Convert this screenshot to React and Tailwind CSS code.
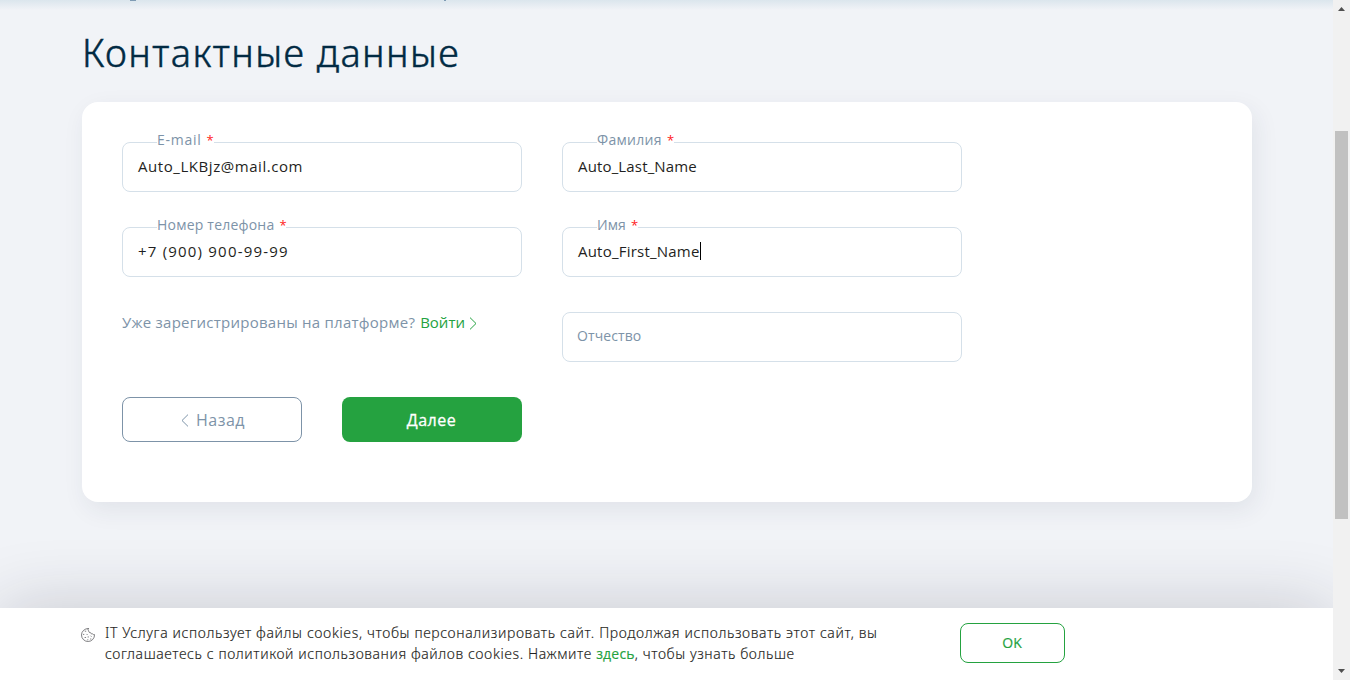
function Field({ label, labelClass, value, valueClass, caret }) {
  return (
    <div className="relative flex h-[50px] w-[400px] items-center rounded-[8px] border border-[#d5e0e9] bg-white px-[15px] pb-[2px]">
      <span className={`whitespace-pre text-[15px] leading-5 text-[#1f1f22] ${valueClass}`}>{value}</span>
      {caret && <span className="h-[18px] w-px bg-black" />}
      <label className="absolute -top-[13px] left-[34px] flex gap-[5px] bg-white pr-px text-[14px] leading-5 text-[#7d93a8]">
        <span className={labelClass}>{label}</span>
        <span className="w-[6px] text-[13px] text-[#ff1a1a]">*</span>
      </label>
    </div>
  );
}

function Chevron({ left, className }) {
  return (
    <svg viewBox="0 0 8 13" fill="none" stroke="currentColor" strokeWidth="1" className={className}>
      <path d={left ? "M7 .6 1 6.5 7 12.4" : "M1 .6 7 6.5 1 12.4"} />
    </svg>
  );
}

function Cookie() {
  return (
    <svg width="14" height="14" viewBox="0 0 14 14" fill="none" stroke="#55565a" strokeWidth=".75" strokeLinecap="round" strokeLinejoin="round">
      <path d="M7.2.5A6.5 6.5 0 1 0 13.5 6.6c-.8.2-1.5-.1-1.8-.7-.8.3-1.8-.2-1.9-1.1-1.3.2-2.2-.7-1.9-1.8C7 2.6 6.7 1.3 7.2.5Z" />
      <path d="M4.2 3.2h.6M2.4 6.4h.5M5.8 6.2l.5.5M4 9.5h.7M7.2 8.7v.5M9.800 8l.4.4M9.500 11h.4M6.700 11.800h.2" />
    </svg>
  );
}

export default function App() {
  return (
    <div className="flex h-[680px] w-[1350px] overflow-hidden bg-[#f1f3f7] font-['Open_Sans','Noto_Sans',sans-serif]">
      <div className="flex w-[1333px] flex-col overflow-hidden">
        <main className="flex h-[608px] flex-col">
          <div className="flex h-[10px] items-start bg-linear-to-b from-[#dbe6ed] via-[#e4ebf1] via-40% to-[#f1f3f7]">
            <span className="ml-[130px] h-px w-[6px] bg-[#7f9bb4]" />
            <span className="ml-[308px] h-px w-[2px] bg-[#7f9bb4]" />
          </div>
          <h1 className="ml-[82px] mt-[14px] h-[56px] whitespace-nowrap font-['Noto_Sans'] text-[38px] font-light leading-[56px] tracking-[1.43px] text-[#012a43] [-webkit-text-stroke:0.5px_#012a43]">
            Контактные данные
          </h1>
          <section className="ml-[82px] mt-[22px] flex h-[400px] w-[1170px] shrink-0 gap-[40px] rounded-[16px] bg-white px-[40px] pt-[40px] shadow-[4px_8px_24px_rgba(40,45,75,0.08)]">
            <div className="flex w-[400px] flex-col">
              <Field label="E-mail" labelClass="tracking-[.75px]" value="Auto_LKBjz@mail.com" valueClass="tracking-[.56px]" />
              <div className="mt-[35px]">
                <Field label="Номер телефона" labelClass="tracking-[.21px]" value="+7 (900) 900-99-99" valueClass="tracking-[1.2px]" />
              </div>
              <div className="mt-[35px] flex h-5 items-center whitespace-nowrap text-[15px] leading-5 text-[#7d93a8]">
                <span className="tracking-[.25px]">Уже зарегистрированы на платформе?</span>
                <a className="ml-[5px] flex items-center text-[#24a240]">
                  Войти
                  <Chevron className="ml-[4px] mt-[2px] h-[13px] w-[8px]" />
                </a>
              </div>
              <div className="mt-[65px] flex gap-[40px] text-[16px] tracking-[.5px]">
                <button className="flex h-[45px] w-[180px] items-center justify-center gap-[7px] rounded-[8px] border border-[#7d93a8] pl-[2px] text-[#7d93a8]">
                  <Chevron left className="mt-[2px] h-[13px] w-[8px]" />
                  <span className="leading-5">Назад</span>
                </button>
                <button className="h-[45px] w-[180px] rounded-[8px] bg-[#25a240] pr-px text-white [-webkit-text-stroke:0.3px_white]">Далее</button>
              </div>
            </div>
            <div className="flex flex-col gap-[35px]">
              <Field label="Фамилия" labelClass="tracking-[.3px]" value="Auto_Last_Name" valueClass="tracking-[.15px]" />
              <Field label="Имя" labelClass="tracking-[.1px]" value="Auto_First_Name" valueClass="tracking-[.22px]" caret />
              <div className="flex h-[50px] w-[400px] items-center rounded-[8px] border border-[#d5e0e9] px-[14px] pb-[3px] text-[14px] leading-5 tracking-[.1px] text-[#7d93a8]">
                Отчество
              </div>
            </div>
          </section>
        </main>
        <footer className="relative flex h-[72px] shrink-0 items-start bg-white pl-[81px] pt-[15px] shadow-[0_0_70px_rgba(30,32,50,0.2)]">
          <div className="mt-[5px]">
            <Cookie />
          </div>
          <p className="-mt-px ml-[10px] w-[855px] whitespace-nowrap font-['Noto_Sans'] text-[14px] font-light leading-[21px] tracking-[.62px] text-[#1f1f22] [-webkit-text-stroke:0.15px_currentColor]">
            IT Услуга использует файлы cookies, чтобы персонализировать сайт. Продолжая использовать этот сайт, вы
            <br />
            <span className="tracking-[.585px]">
              соглашаетесь с политикой использования файлов cookies. Нажмите{" "}
              <a className="font-['Open_Sans'] font-normal tracking-[.2px] text-[#24a240]">здесь</a>, чтобы узнать больше
            </span>
          </p>
          <button className="h-[40px] w-[105px] rounded-[8px] border border-[#24a240] pr-px text-[14px] leading-5 text-[#24a240] [-webkit-text-stroke:0.15px_currentColor]">OK</button>
        </footer>
      </div>
      <aside className="flex w-[17px] flex-col items-center bg-[#f1f1f1]">
        <svg width="17" height="17" viewBox="0 0 17 17" fill="#505050"><path d="M5 11h7L8.5 7Z" /></svg>
        <div className="mt-[114px] h-[388px] w-[13px] bg-[#c1c1c1]" />
        <svg width="17" height="17" viewBox="0 0 17 17" fill="#505050" className="mt-auto"><path d="M5 6h7L8.5 10Z" /></svg>
      </aside>
    </div>
  );
}
